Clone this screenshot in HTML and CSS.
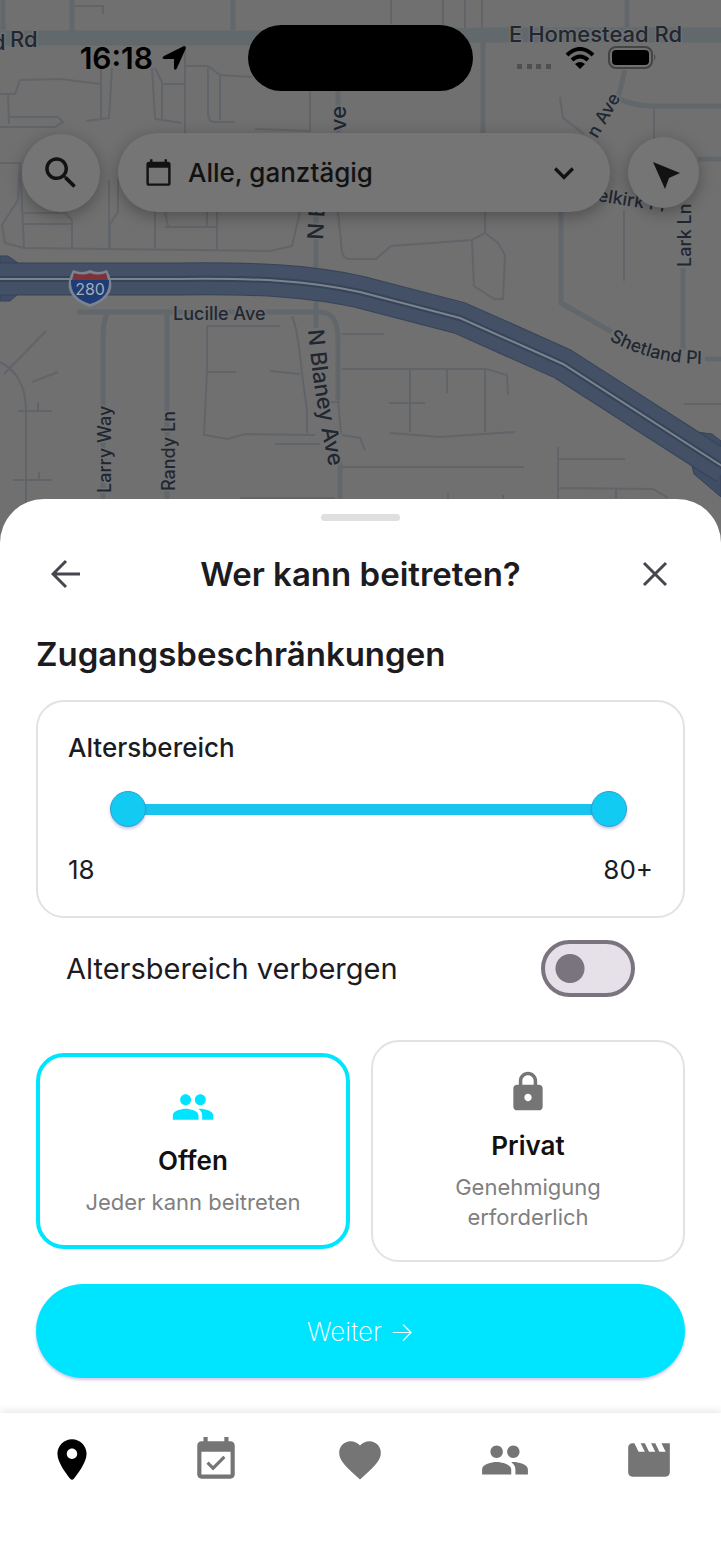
FILE: index.html
```html
<!DOCTYPE html>
<html lang="de">
<head>
    <meta charset="UTF-8">
    <meta name="viewport" content="width=device-width, initial-scale=1.0">
    <title>Wer kann beitreten?</title>
    <link rel="stylesheet" href="styles.css">
</head>
<body>

    <!-- Map with status bar and filter controls -->
    <div class="map">
        <svg class="map-canvas" viewBox="0 0 721 560" preserveAspectRatio="xMidYMin slice" aria-hidden="true">
            <!-- wide roads -->
            <g class="road-wide">
                <path d="M0 38H250L500 35H721"/>
            </g>
            <g class="road">
                <path d="M72 0V32M233 0V30M627 0V27M338 88V140M316 205V328M340 462V560"/>
                <path d="M77 312H320Q338 312 338 340V400M107 312Q103 325 103 335V560M167 312V560"/>
                <path d="M625 70L618 98Q630 105 650 106H721M561 210V303L612 332M683 268V350M705 359H721M698 159H721M3 0V30M483 42V135"/>
            </g>
            <!-- small streets -->
            <g class="street">
                <path d="M74 6H103V14M391 0V24M443 0V28M465 0V28M482 0V28M0 94H15L20 80L60 79L101 84M101 68V120M8 94L9 124M0 127H55L63 122L58 117H10M86 121L109 118L112 68M152 68L155 119L182 123M155 68L162 82V120M162 84H185M185 50V133M185 66H208L220 75L252 77M208 68V115Q209 122 214 122H235M220 76V120M310 90V131L255 129"/>
                <path d="M0 163H20L18 200L2 225L5 243L24 248L270 251L292 246L300 212M20 163L24 248M22 213H65L72 220V249M24 224H72M118 178V212L110 224V249M109 180V248M155 212V249M165 227H218M217 212V249M207 212V226M165 212L168 226M338 212L342 252Q344 259 350 259H376L391 246L472 240L485 233L498 243L505 255L503 299H494L474 286L472 240M485 212V233"/>
                <path d="M560 97L563 118L584 134M654 107V140M624 210V281"/>
                <path d="M207 326V370L204 435L228 439L245 434L315 435M207 326H280M208 372H236M270 371L300 374M292 316Q298 330 302 374L307 410V433M275 444H320M342 334H384M342 369H486L507 375L508 395M410 369V432M447 368V393M485 369V432M389 403H425M390 433L440 437L515 432M342 435L360 438L365 450M342 467H524M330 402H340M338 340V400L341 434M240 498H335"/>
                <path d="M0 362Q25 375 26 408V560M4 374L46 331M32 382L58 372M18 411H52M38 402V411M13 480H52M39 472V480M558 447V560M558 459H625M558 488L653 489L668 498M616 488V498M448 493V500M503 495V500M684 404H721"/>
            </g>
            <!-- highway 280 -->
            <path class="ramp" d="M0 256H8L18 263V294L10 301H0ZM697 432L712 434L721 441V497L694 474L692 466Z"/>
            <path class="highway-edge" d="M0 279H180C260 278 310 281 360 292L460 318L563 364L725 468"/>
            <path class="highway" d="M0 279H180C260 278 310 281 360 292L460 318L563 364L725 468"/>
            <path class="highway-middle" d="M0 279H180C260 278 310 281 360 292L460 318L563 364L725 468"/>
            <path class="highway-line" d="M0 279H180C260 278 310 281 360 292L460 318L563 364L725 468"/>
            <!-- interstate shield -->
            <g>
                <path class="shield-rim" d="M73 270Q82 274 90 270Q98 274 107 270Q114 283 110 292Q105 302 90 307Q75 302 70 292Q66 283 73 270Z"/>
                <path class="shield-blue" d="M71 280H109Q110 298 90 304Q70 298 71 280Z"/>
                <path class="shield-red" d="M74 273Q83 276 90 273Q97 276 106 273L108 280H72Z"/>
                <text class="shield-text" x="90" y="295">280</text>
            </g>
            <!-- street names -->
            <path id="shetland" class="guide" d="M609 340Q655 366 715 364"/>
            <path id="blaney" class="guide" d="M308 330Q314 400 330 470"/>
            <g class="labels">
                <text x="-8" y="50" class="big">d</text>
                <text x="10" y="47" class="big">Rd</text>
                <text x="509" y="42" class="big">E Homestead Rd</text>
                <text x="173" y="320">Lucille Ave</text>
                <text transform="translate(111 493) rotate(-90)">Larry Way</text>
                <text transform="translate(175 491) rotate(-90)">Randy Ln</text>
                <text transform="translate(691 267) rotate(-90)">Lark Ln</text>
                <text transform="translate(346 131) rotate(-90)" class="big">ve</text>
                <text transform="translate(323 240) rotate(-87)" class="big">N Bl</text>
                <text transform="translate(597 139) rotate(-60)">n Ave</text>
                <text transform="translate(597 201) rotate(9)">elkirk Pl</text>
                <text><textPath href="#shetland">Shetland Pl</textPath></text>
                <text class="big"><textPath href="#blaney">N Blaney Ave</textPath></text>
            </g>
        </svg>

        <div class="status-bar">
            <div class="status-time">
                <span>16:18</span>
                <svg width="26" height="26" viewBox="0 0 26 26" aria-hidden="true">
                    <path d="M23 1Q25 1 25 3L16 23Q15 26 13 24V14H3Q0 13 3 11Z"/>
                </svg>
            </div>
            <div class="island"></div>
            <div class="status-icons">
                <svg width="36" height="22" viewBox="0 0 36 22" class="signal" aria-hidden="true">
                    <path d="M1 17h5v5H1zM11 17h5v5h-5zM20 17h5v5h-5zM30 17h5v5h-5z"/>
                </svg>
                <svg width="30" height="22" viewBox="0 0 30 22" aria-hidden="true">
                    <path d="M15 22L10 17Q15 13 20 17Z"/>
                    <path class="wave" d="M2 8Q15 -4 28 8M7 13Q15 6 23 13"/>
                </svg>
                <svg width="49" height="24" viewBox="0 0 49 24" aria-hidden="true">
                    <rect class="battery" x="1" y="1" width="43" height="21" rx="7"/>
                    <rect x="4" y="4" width="37" height="15" rx="4"/>
                    <path class="signal" d="M46 8Q49 11 46 15Z"/>
                </svg>
            </div>
        </div>

        <div class="map-controls">
            <button class="round-button" aria-label="Suchen">
                <svg width="42" height="42" viewBox="0 0 24 24"><path d="M15.5 14h-.79l-.28-.27C15.41 12.59 16 11.11 16 9.5 16 5.91 13.09 3 9.5 3S3 5.91 3 9.5 5.91 16 9.5 16c1.61 0 3.09-.59 4.23-1.57l.27.28v.79l5 4.99L20.49 19l-4.99-5zm-6 0C7.01 14 5 11.99 5 9.5S7.01 5 9.5 5 14 7.01 14 9.5 11.99 14 9.5 14z"/></svg>
            </button>
            <button class="filter-button">
                <svg width="29" height="29" viewBox="0 0 24 24"><path d="M20 3h-1V1h-2v2H7V1H5v2H4c-1.1 0-2 .9-2 2v16c0 1.1.9 2 2 2h16c1.1 0 2-.9 2-2V5c0-1.1-.9-2-2-2zm0 18H4V8h16v13z"/></svg>
                <span>Alle, ganztägig</span>
                <svg width="40" height="40" viewBox="0 0 24 24"><path d="M7.41 8.59L12 13.17l4.59-4.58L18 10l-6 6-6-6 1.41-1.41z"/></svg>
            </button>
            <button class="round-button small" aria-label="Mein Standort">
                <svg width="36" height="36" viewBox="0 0 36 36"><path d="M7 7L34 18L23 23L19 34Z"/></svg>
            </button>
        </div>
    </div>

    <!-- Bottom sheet -->
    <main class="sheet">
        <div class="handle"></div>

        <div class="sheet-header">
            <button class="icon-button" aria-label="Zurück">
                <svg width="30" height="30" viewBox="0 0 30 30"><path d="M29 15H2M15 2L2 15L15 28"/></svg>
            </button>
            <h1>Wer kann beitreten?</h1>
            <button class="icon-button" aria-label="Schließen">
                <svg width="30" height="30" viewBox="0 0 30 30"><path d="M4 4L26 26M26 4L4 26"/></svg>
            </button>
        </div>

        <h2>Zugangsbeschränkungen</h2>

        <div class="age-card">
            <h3>Altersbereich</h3>
            <div class="range">
                <input type="range" min="16" max="80" value="18" aria-label="Mindestalter">
                <input type="range" min="16" max="80" value="80" aria-label="Höchstalter">
            </div>
            <div class="range-values">
                <span>18</span>
                <span>80+</span>
            </div>
        </div>

        <div class="switch-row">
            <label for="hideAge">Altersbereich verbergen</label>
            <input type="checkbox" id="hideAge" class="switch" role="switch">
        </div>

        <div class="options">
            <label class="option">
                <input type="radio" name="access" checked>
                <svg width="44" height="44" viewBox="0 0 24 24"><path d="M16 11c1.66 0 2.99-1.34 2.99-3S17.66 5 16 5c-1.66 0-3 1.34-3 3s1.34 3 3 3zm-8 0c1.66 0 2.99-1.34 2.99-3S9.66 5 8 5C6.34 5 5 6.34 5 8s1.34 3 3 3zm0 2c-2.33 0-7 1.17-7 3.5V19h14v-2.5c0-2.33-4.67-3.5-7-3.5zm8 0c-.29 0-.62.02-.97.05 1.16.84 1.97 1.97 1.97 3.45V19h6v-2.5c0-2.33-4.67-3.5-7-3.5z"/></svg>
                <strong>Offen</strong>
                <span>Jeder kann beitreten</span>
            </label>
            <label class="option">
                <input type="radio" name="access">
                <svg width="44" height="44" viewBox="0 0 24 24"><path d="M18 8h-1V6c0-2.76-2.24-5-5-5S7 3.24 7 6v2H6c-1.1 0-2 .9-2 2v10c0 1.1.9 2 2 2h12c1.1 0 2-.9 2-2V10c0-1.1-.9-2-2-2zm-6 9c-1.1 0-2-.9-2-2s.9-2 2-2 2 .9 2 2-.9 2-2 2zm3.100-9H8.900V6c0-1.71 1.39-3.1 3.1-3.1s3.1 1.39 3.1 3.1v2z"/></svg>
                <strong>Privat</strong>
                <span>Genehmigung erforderlich</span>
            </label>
        </div>

        <button class="next-button">Weiter →</button>
    </main>

    <!-- Bottom navigation -->
    <nav class="tab-bar">
        <a href="#karte" class="active" aria-label="Karte">
            <svg width="50" height="50" viewBox="0 0 24 24"><path d="M12 2C8.13 2 5 5.13 5 9c0 4.17 4.42 9.92 6.24 12.11.4.48 1.13.48 1.53 0C14.58 18.92 19 13.17 19 9c0-3.87-3.13-7-7-7zm0 9.5c-1.38 0-2.5-1.12-2.5-2.5s1.12-2.5 2.5-2.5 2.5 1.12 2.5 2.5-1.12 2.5-2.5 2.5z"/></svg>
        </a>
        <a href="#termine" aria-label="Termine">
            <svg width="50" height="50" viewBox="0 0 24 24"><path d="M16.53 11.06L15.47 10l-4.88 4.88-2.12-2.12-1.06 1.06L10.59 17l5.94-5.94zM19 3h-1V1h-2v2H8V1H6v2H5c-1.11 0-1.99.9-1.99 2L3 19c0 1.1.89 2 2 2h14c1.1 0 2-.9 2-2V5c0-1.1-.9-2-2-2zm0 16H5V8h14v11z"/></svg>
        </a>
        <a href="#favoriten" aria-label="Favoriten">
            <svg width="50" height="50" viewBox="0 0 24 24"><path d="M12 21.35l-1.45-1.32C5.4 15.36 2 12.28 2 8.5 2 5.42 4.42 3 7.5 3c1.74 0 3.41.81 4.5 2.09C13.09 3.81 14.76 3 16.5 3 19.58 3 22 5.42 22 8.5c0 3.78-3.4 6.86-8.55 11.54L12 21.35z"/></svg>
        </a>
        <a href="#freunde" aria-label="Freunde">
            <svg width="50" height="50" viewBox="0 0 24 24"><path d="M16 11c1.66 0 2.99-1.34 2.99-3S17.66 5 16 5c-1.66 0-3 1.34-3 3s1.34 3 3 3zm-8 0c1.66 0 2.99-1.34 2.99-3S9.66 5 8 5C6.34 5 5 6.34 5 8s1.34 3 3 3zm0 2c-2.33 0-7 1.17-7 3.5V19h14v-2.5c0-2.33-4.67-3.5-7-3.5zm8 0c-.29 0-.62.02-.97.05 1.16.84 1.97 1.97 1.97 3.45V19h6v-2.5c0-2.33-4.67-3.5-7-3.5z"/></svg>
        </a>
        <a href="#videos" aria-label="Videos">
            <svg width="50" height="50" viewBox="0 0 24 24"><path d="M18 4l2 4h-3l-2-4h-2l2 4h-3l-2-4H8l2 4H7L5 4H4c-1.1 0-1.99.9-1.99 2L2 18c0 1.1.9 2 2 2h16c1.1 0 2-.9 2-2V4h-4z"/></svg>
        </a>
    </nav>

</body>
</html>
```
FILE: styles.css
```css
* {
    box-sizing: border-box;
}

body {
    margin: 0;
    min-height: 100vh;
    display: flex;
    flex-direction: column;
    font-family: Inter, "Liberation Sans", sans-serif;
    color: #1c1b1f;
    background: white;
}

h1, h2, h3 {
    margin: 0;
    font-weight: 600;
}

button {
    font-family: inherit;
    color: inherit;
    border: none;
    padding: 0;
    cursor: pointer;
}

/* Map */
.map {
    position: relative;
    height: 560px;
    overflow: hidden;
    background: #707070;
}

.map-canvas {
    position: absolute;
    top: 0;
    left: 0;
    width: 100%;
    height: 100%;
    fill: none;
}

.road-wide {
    stroke: #62696d;
    stroke-width: 15;
}

.road {
    stroke: #62676c;
    stroke-width: 5;
}

.street {
    stroke: #616469;
    stroke-width: 2;
}

.ramp {
    fill: #3f4d65;
    stroke: #364359;
}

.highway-edge {
    stroke: #364359;
    stroke-width: 33;
}

.highway {
    stroke: #435065;
    stroke-width: 31;
}

.highway-middle {
    stroke: #364359;
    stroke-width: 6;
}

.highway-line {
    stroke: #7c838c;
    stroke-width: 2;
}

.shield-rim {
    fill: #7c8494;
}

.shield-blue {
    fill: #1f3c74;
}

.shield-red {
    fill: #7d3238;
}

.shield-text {
    fill: #a5abb5;
    font-size: 16px;
    text-anchor: middle;
}

.guide {
    stroke: none;
}

.labels {
    fill: #22272f;
    stroke: #707173;
    stroke-width: 3;
    paint-order: stroke;
    font-size: 18px;
    font-weight: 500;
}

.labels .big {
    font-size: 22px;
}

/* Status bar */
.status-bar {
    position: relative;
    display: grid;
    grid-template-columns: 1fr 225px 1fr;
    align-items: center;
    padding-top: 25px;
    color: black;
}

.status-time {
    display: flex;
    align-items: center;
    justify-content: flex-end;
    gap: 8px;
    padding-right: 61px;
    font-size: 30px;
    font-weight: 600;
}

.island {
    height: 66px;
    border-radius: 33px;
    background: black;
}

.status-icons {
    display: flex;
    align-items: center;
    gap: 13px;
    padding-left: 43px;
}

.signal {
    fill: #505050;
}

.wave {
    fill: none;
    stroke: black;
    stroke-width: 4;
}

.battery {
    fill: none;
    stroke: #444444;
    stroke-width: 2;
}

/* Filter controls */
.map-controls {
    position: relative;
    display: flex;
    align-items: center;
    gap: 18px;
    margin-top: 42px;
    padding: 0 22px;
}

.map-controls button {
    display: flex;
    align-items: center;
    background: #757575;
    color: #121212;
    box-shadow: 0 4px 16px rgba(0, 0, 0, 0.3);
}

.map-controls svg {
    fill: #121212;
}

.round-button {
    justify-content: center;
    width: 78px;
    height: 78px;
    border-radius: 50%;
}

.round-button.small {
    width: 71px;
    height: 71px;
}

.filter-button {
    flex: 1;
    gap: 15px;
    height: 79px;
    border-radius: 40px;
    font-size: 26px;
    font-weight: 500;
}

.map-controls .filter-button {
    padding: 0 26px;
}

.filter-button span {
    flex: 1;
    text-align: left;
}

/* Bottom sheet */
.sheet {
    position: relative;
    flex: 1;
    margin-top: -61px;
    padding: 15px 36px 35px;
    border-radius: 44px 44px 0 0;
    background: white;
}

.handle {
    width: 79px;
    height: 7px;
    margin: 0 auto;
    border-radius: 4px;
    background: #dfdfdf;
}

.sheet-header {
    display: flex;
    align-items: center;
    justify-content: space-between;
    margin-top: 23px;
}

.icon-button {
    display: flex;
    align-items: center;
    justify-content: center;
    width: 60px;
    height: 60px;
    background: none;
}

.icon-button svg {
    fill: none;
    stroke: #49454f;
    stroke-width: 3;
}

h1, h2 {
    font-size: 33px;
    line-height: 40px;
}

h2 {
    margin-top: 30px;
}

.age-card {
    margin-top: 26px;
    padding: 28px 30px;
    border: 2px solid #e2e2e2;
    border-radius: 28px;
}

h3 {
    font-size: 26px;
    line-height: 36px;
    font-weight: 500;
}

.range {
    display: grid;
    margin: 25px 26px;
}

/* both sliders share one track */
.range input {
    grid-area: 1 / 1;
    appearance: none;
    width: 100%;
    height: 36px;
    margin: 0;
    background: none;
    pointer-events: none;
}

.range input:first-child {
    background: linear-gradient(#19c5ee, #19c5ee) center / calc(100% - 68px) 11px no-repeat;
}

.range input::-webkit-slider-thumb {
    appearance: none;
    width: 36px;
    height: 36px;
    border: 1px solid #2f9fd0;
    border-radius: 50%;
    background: #12cbf2;
    box-shadow: 0 2px 3px rgba(90, 70, 180, 0.3);
    pointer-events: auto;
}

.range-values {
    display: flex;
    justify-content: space-between;
    font-size: 26px;
    line-height: 36px;
}

.switch-row {
    display: flex;
    align-items: center;
    justify-content: space-between;
    margin-top: 22px;
    padding: 0 50px 0 30px;
    font-size: 29px;
}

.switch {
    appearance: none;
    width: 94px;
    height: 57px;
    margin: 0;
    border: 4px solid #79747e;
    border-radius: 29px;
    background: radial-gradient(circle at 25px 50%, #79747e 14px, #e6e0e9 15px);
}

.switch:checked {
    background: radial-gradient(circle at 61px 50%, white 14px, #00e5ff 15px);
}

.options {
    display: grid;
    grid-template-columns: 1fr 1fr;
    align-items: center;
    gap: 21px;
    margin-top: 43px;
}

.option {
    display: flex;
    flex-direction: column;
    align-items: center;
    padding: 28px 40px;
    border: 2px solid #e2e2e2;
    border-radius: 28px;
    text-align: center;
    cursor: pointer;
}

.option:has(input:checked) {
    border: 4px solid #00e5ff;
}

.option input {
    position: absolute;
    opacity: 0;
}

.option svg {
    fill: #757575;
}

.option:has(input:checked) svg {
    fill: #00e5ff;
}

.option strong {
    margin: 15px 0 9px;
    font-size: 26px;
    line-height: 34px;
    font-weight: 600;
    color: #111111;
}

.option span {
    font-size: 22px;
    line-height: 30px;
    color: #808080;
}

.next-button {
    width: 100%;
    height: 94px;
    margin-top: 22px;
    border-radius: 47px;
    background: #00e5ff;
    box-shadow: 0 2px 3px rgba(90, 70, 180, 0.3);
    color: white;
    font-size: 26px;
    font-weight: 200;
}

/* Bottom navigation */
.tab-bar {
    position: relative;
    display: grid;
    grid-template-columns: repeat(5, 1fr);
    padding: 22px 0 83px;
    background: white;
    box-shadow: 0 -2px 8px rgba(0, 0, 0, 0.1);
}

.tab-bar a {
    display: flex;
    justify-content: center;
}

.tab-bar svg {
    fill: #757575;
}

.tab-bar .active svg {
    fill: black;
}
```
